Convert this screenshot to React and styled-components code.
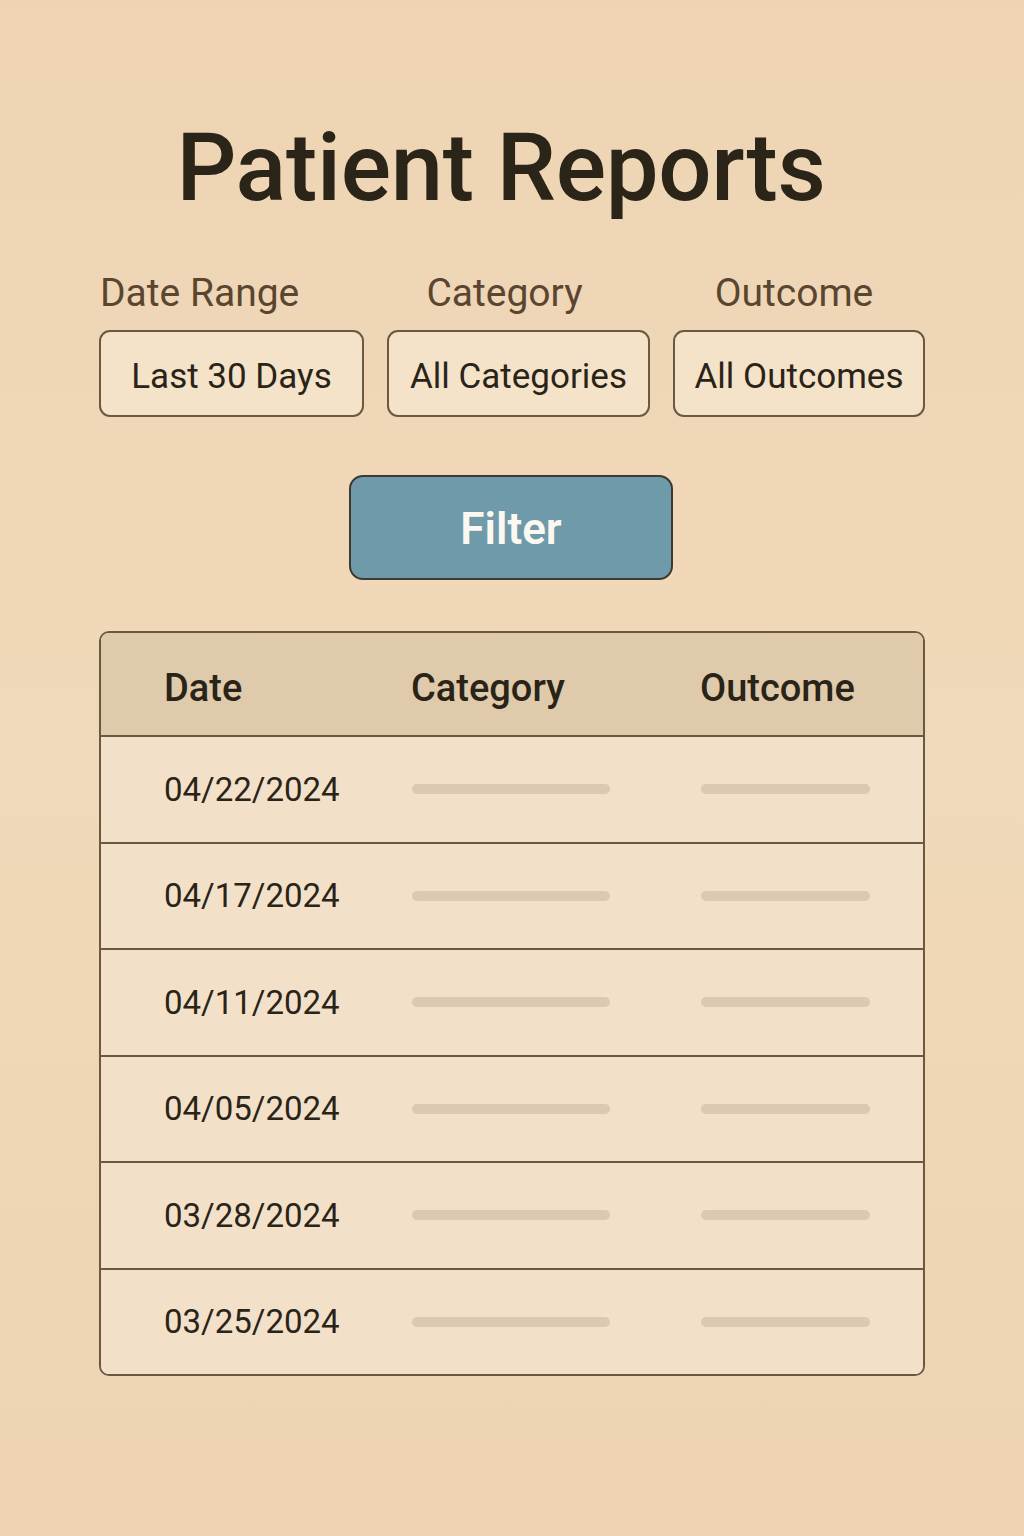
import styled, { createGlobalStyle } from 'styled-components';

const GlobalStyle = createGlobalStyle`
  html, body {
    margin: 0;
    padding: 0;
    background: #eed5b4;
  }
  body {
    font-family: Roboto, "Liberation Sans", sans-serif;
  }
`;

const Page = styled.div`
  min-height: 1536px;
  background: linear-gradient(180deg, #eed4b3 0%, #f0d9ba 50%, #edd3b1 100%);
  display: flex;
  justify-content: center;
`;

const Main = styled.main`
  width: 826px;
  padding-top: 121px;
  display: flex;
  flex-direction: column;
`;

const Title = styled.h1`
  margin: 0 22px 0 0;
  text-align: center;
  font-size: 94px;
  font-weight: 500;
  line-height: 1;
  color: #2b2419;
  letter-spacing: -0.3px;
`;

const Filters = styled.div`
  margin-top: 58px;
  display: grid;
  grid-template-columns: 265px 263px 252px;
  column-gap: 23px;
  row-gap: 17px;
`;

const Label = styled.div`
  font-size: 39px;
  line-height: 40px;
  color: #5a4630;
  text-align: ${(p) => p.$align || 'center'};
  padding-left: ${(p) => (p.$align === 'left' ? '1px' : '0')};
  padding-right: ${(p) => p.$shift || 0}px;
`;

const Select = styled.div`
  height: 87px;
  box-sizing: border-box;
  padding-top: 5px;
  border: 2px solid #6b5940;
  border-radius: 11px;
  background: #f4e3c9;
  display: flex;
  align-items: center;
  justify-content: center;
  font-size: 35px;
  color: #2a2318;
`;

const FilterButton = styled.button`
  align-self: center;
  margin: 58px 0 0 -2px;
  width: 324px;
  height: 105px;
  padding-top: 4px;
  border: 2px solid #3c3a31;
  border-radius: 14px;
  background: #6f9aa9;
  color: #fbf8f2;
  font-family: inherit;
  font-size: 44px;
  font-weight: 600;
  cursor: pointer;
`;

const Table = styled.div`
  margin-top: 51px;
  border: 2px solid #6a5840;
  border-radius: 10px;
  overflow: hidden;
  background: #f2e1c8;
`;

const Row = styled.div`
  display: grid;
  grid-template-columns: 247px 289px 1fr;
  align-items: center;
  box-sizing: border-box;
  padding: ${(p) => (p.$head ? '7px 0 0 63px' : '0 0 0 63px')};
  height: ${(p) => (p.$head ? '102px' : '106.5px')};
  background: ${(p) => (p.$head ? '#dfcaab' : '#f2e1c8')};
  border-top: ${(p) => (p.$first ? 'none' : '2px solid #6a5840')};
`;

const HeadCell = styled.div`
  font-size: 38px;
  font-weight: 500;
  color: #2a2418;
`;

const DateCell = styled.div`
  font-size: 33px;
  color: #2a2418;
`;

const Bar = styled.div`
  width: ${(p) => p.$w}px;
  height: 10px;
  border-radius: 5px;
  background: #dccab0;
  margin-left: 1px;
`;

const dates = ['04/22/2024', '04/17/2024', '04/11/2024', '04/05/2024', '03/28/2024', '03/25/2024'];

export default function App() {
  return (
    <>
      <GlobalStyle />
      <Page>
        <Main>
          <Title>Patient Reports</Title>
          <Filters>
            <Label $align="left">Date Range</Label>
            <Label $shift={28}>Category</Label>
            <Label $shift={10}>Outcome</Label>
            <Select>Last 30 Days</Select>
            <Select>All Categories</Select>
            <Select>All Outcomes</Select>
          </Filters>
          <FilterButton>Filter</FilterButton>
          <Table>
            <Row $head $first>
              <HeadCell>Date</HeadCell>
              <HeadCell>Category</HeadCell>
              <HeadCell>Outcome</HeadCell>
            </Row>
            {dates.map((d) => (
              <Row key={d}>
                <DateCell>{d}</DateCell>
                <Bar $w={198} />
                <Bar $w={169} />
              </Row>
            ))}
          </Table>
        </Main>
      </Page>
    </>
  );
}
